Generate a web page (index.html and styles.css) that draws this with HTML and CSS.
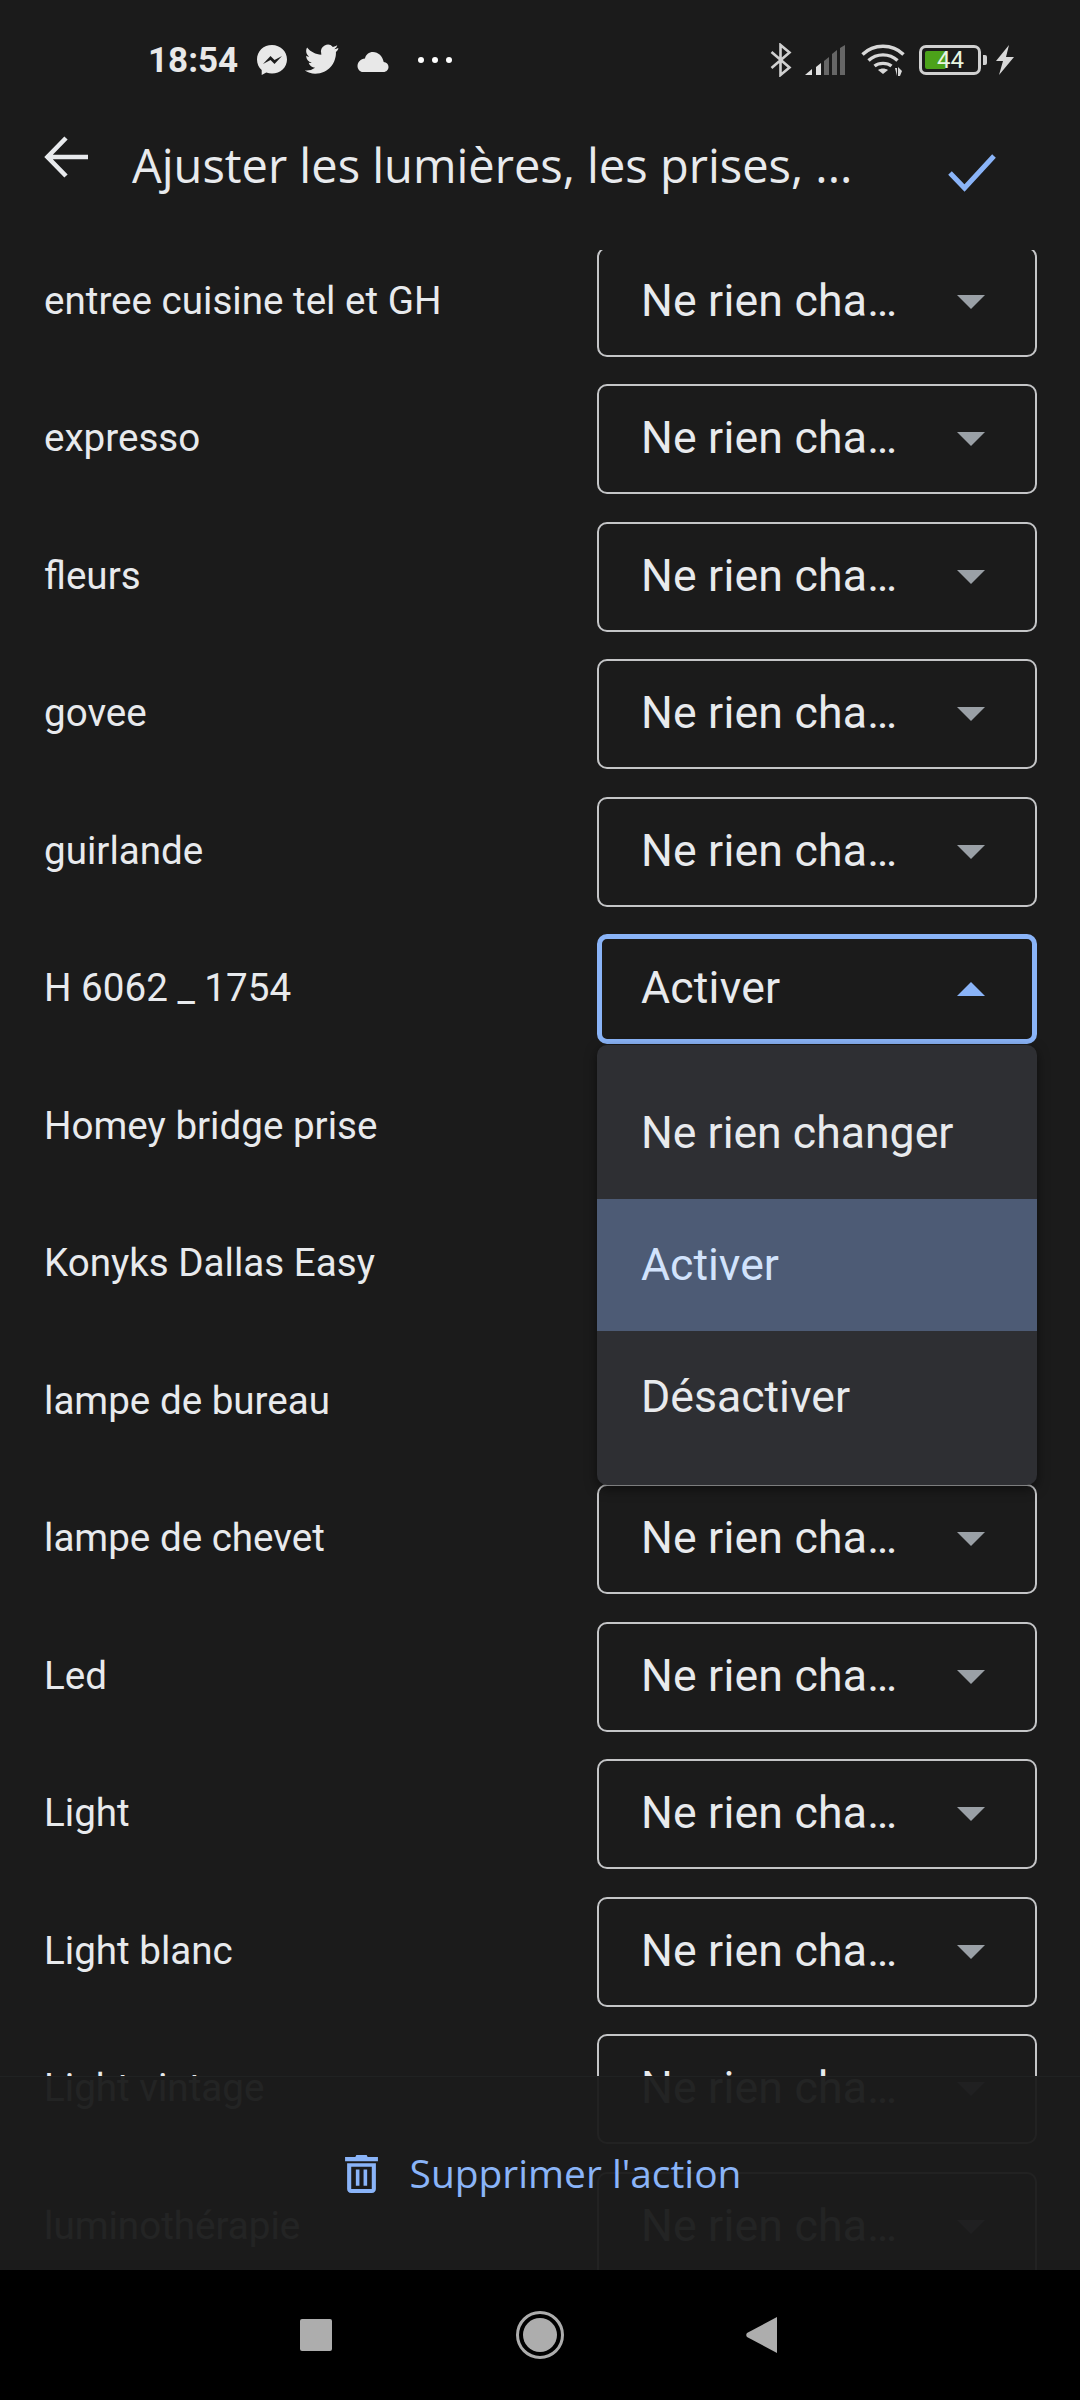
FILE: index.html
```html
<!DOCTYPE html>
<html lang="fr">
<head>
    <meta charset="UTF-8">
    <title>Ajuster les lumières, les prises, ...</title>
    <link rel="stylesheet" href="styles.css">
</head>
<body>
    <div class="screen">
        <div class="status-bar">
            <div class="status-left">
                <span class="clock">18:54</span>
                <svg class="ico-msg" viewBox="0 0 32 32"><path fill="#e8e8e8" d="M16 1C7.6 1 1 7.1 1 15.4c0 4.3 1.8 8 4.7 10.6v5l4.6-2.500c1.800.6 3.700.9 5.700.9 8.400 0 15-6.100 15-14S24.400 1 16 1z"/><path fill="#1b1b1b" d="M7 20l7.500-8 4 4 7.500-4-7.500 8-4-4z"/></svg>
                <svg class="ico-bird" viewBox="0 0 24 24"><path fill="#e8e8e8" d="M23.500 3.500c-.8.400-1.800.6-2.700.7 1-.6 1.700-1.500 2-2.600-.9.500-1.900.9-3 1.100A4.700 4.700 0 0 0 11.800 7c0 .4 0 .7.100 1.100C8 7.900 4.500 6 2.100 3.100c-1.200 2.100-.6 4.800 1.500 6.300-.8 0-1.500-.2-2.100-.6 0 2.300 1.600 4.300 3.800 4.700-.7.200-1.400.2-2.100.1.600 1.900 2.300 3.200 4.400 3.300A9.500 9.500 0 0 1 .5 18.800C2.600 20.200 5 21 7.700 21c9.300 0 14.500-7.800 14.200-14.900 1-.7 1.800-1.600 1.600-2.600z"/></svg>
                <svg class="ico-cloud" viewBox="0 0 32 22"><path fill="#e8e8e8" d="M16 1c-4 0-7.200 2.700-8 6.400C3.700 7.700.5 11 .5 15c0 3.300 2.500 6 5.500 6h20.500c2.800 0 5-2.200 5-5 0-2.700-2.100-4.800-4.800-5C25.600 5.300 21.300 1 16 1z"/></svg>
                <span class="dots"><i></i><i></i><i></i></span>
            </div>
            <div class="status-right">
                <svg class="ico-bt" viewBox="0 0 22 34"><path fill="none" stroke="#d0d0d0" stroke-width="2.600" d="M1.500 9l18 15.500-9 7.500V2l9 7.500L1.500 25"/></svg>
                <svg class="ico-signal" viewBox="0 0 40 30"><path fill="#e0e0e0" d="M0 30l7-6v6z"/><path fill="#e0e0e0" d="M11 22l5-4v12h-5z"/><path fill="#666" d="M19 16l5-4v18h-5zM27 9l5-4v25h-5zM35 3l5-3v30h-5z"/></svg>
                <svg class="ico-wifi" viewBox="0 0 44 34"><g fill="none" stroke="#d8d8d8" stroke-width="3.400"><path d="M1.500 11.500c11-11 30-11 41 0"/><path d="M7.500 17.500c8-7.500 21-7.500 29 0"/><path d="M13.500 23c4.500-3.500 12.500-3.500 17 0"/></g><path fill="#d8d8d8" d="M22 31l-5-4c3-2 7-2 10 0z"/><path fill="#d8d8d8" d="M34 25h2v8zM39 33h-2v-9l4 4z"/></svg>
                <div class="battery">
                    <div class="battery-fill"></div>
                    <span class="battery-num">44</span>
                </div>
                <div class="battery-tip"></div>
                <svg class="ico-bolt" viewBox="0 0 20 30"><path fill="#d8d8d8" d="M14 0L1 16h7L4 30l15-18h-8z"/></svg>
            </div>
        </div>

        <header class="top-bar">
            <svg class="ico-back" viewBox="0 0 44 42"><path fill="none" stroke="#e8eaed" stroke-width="4.600" d="M44 21H4M22 2L3.500 21 22 40"/></svg>
            <h1 class="title">Ajuster les lumières, les prises, ...</h1>
            <svg class="ico-check" viewBox="0 0 48 38"><path fill="none" stroke="#8ab4f8" stroke-width="5" d="M2 19l14.500 15L46 2"/></svg>
        </header>

        <main class="device-list">
            <div class="row"><span class="row-name">entree cuisine tel et GH</span><div class="select"><span class="select-value">Ne rien cha…</span><span class="caret"></span></div></div>
            <div class="row"><span class="row-name">expresso</span><div class="select"><span class="select-value">Ne rien cha…</span><span class="caret"></span></div></div>
            <div class="row"><span class="row-name">fleurs</span><div class="select"><span class="select-value">Ne rien cha…</span><span class="caret"></span></div></div>
            <div class="row"><span class="row-name">govee</span><div class="select"><span class="select-value">Ne rien cha…</span><span class="caret"></span></div></div>
            <div class="row"><span class="row-name">guirlande</span><div class="select"><span class="select-value">Ne rien cha…</span><span class="caret"></span></div></div>
            <div class="row">
                <span class="row-name">H 6062 _ 1754</span>
                <div class="select open">
                    <span class="select-value">Activer</span><span class="caret up"></span>
                    <div class="menu">
                        <div class="menu-item">Ne rien changer</div>
                        <div class="menu-item selected">Activer</div>
                        <div class="menu-item">Désactiver</div>
                    </div>
                </div>
            </div>
            <div class="row"><span class="row-name">Homey bridge prise</span></div>
            <div class="row"><span class="row-name">Konyks Dallas Easy</span></div>
            <div class="row"><span class="row-name">lampe de bureau</span></div>
            <div class="row"><span class="row-name">lampe de chevet</span><div class="select"><span class="select-value">Ne rien cha…</span><span class="caret"></span></div></div>
            <div class="row"><span class="row-name">Led</span><div class="select"><span class="select-value">Ne rien cha…</span><span class="caret"></span></div></div>
            <div class="row"><span class="row-name">Light</span><div class="select"><span class="select-value">Ne rien cha…</span><span class="caret"></span></div></div>
            <div class="row"><span class="row-name">Light blanc</span><div class="select"><span class="select-value">Ne rien cha…</span><span class="caret"></span></div></div>
            <div class="row"><span class="row-name">Light vintage</span><div class="select"><span class="select-value">Ne rien cha…</span><span class="caret"></span></div></div>
            <div class="row"><span class="row-name">luminothérapie</span><div class="select"><span class="select-value">Ne rien cha…</span><span class="caret"></span></div></div>

            <div class="delete-bar">
                <svg class="ico-trash" viewBox="0 0 32 37"><path fill="#8ab4f8" d="M11 0h10l1 2h10v4H0V2h10zM2 8h28v25c0 2-1.500 4-4 4H6c-2.500 0-4-2-4-4zm4 3.500V33h20V11.500zM10.500 14h3.500v16h-3.500zM18 14h3.500v16H18z"/></svg>
                <span class="delete-label">Supprimer l'action</span>
            </div>
        </main>

        <nav class="nav-bar">
            <div class="nav-square"></div>
            <div class="nav-circle"><div class="nav-dot"></div></div>
            <svg class="nav-back" viewBox="0 0 32 36"><path fill="#adadad" d="M31 0v36L1 20c-1-1-1-3 0-4z"/></svg>
        </nav>
    </div>
</body>
</html>
```

FILE: styles.css
```css
/* page */
html, body {
    margin: 0;
    padding: 0;
    background: #1b1b1b;
}

.screen {
    width: 1080px;
    height: 2400px;
    display: flex;
    flex-direction: column;
    overflow: hidden;
    font-family: Roboto, sans-serif;
    color: #e8eaed;
}

/* status bar */
.status-bar {
    height: 120px;
    display: flex;
    justify-content: space-between;
    align-items: flex-start;
    padding: 44px 65px 0 148px;
    box-sizing: border-box;
    flex-shrink: 0;
}

.status-left, .status-right {
    display: flex;
    align-items: center;
    height: 32px;
}

.clock {
    font-size: 35px;
    font-weight: 700;
    color: #e8e8e8;
    width: 108px;
}

.ico-msg { width: 32px; height: 32px; }
.ico-bird { width: 35px; height: 35px; margin-left: 16px; }
.ico-cloud { width: 32px; height: 22px; margin-left: 18px; margin-top: 4px; }

.dots {
    display: flex;
    gap: 8px;
    margin-left: 29px;
}

.dots i {
    width: 6px;
    height: 6px;
    background: #fff;
    border-radius: 50%;
}

.ico-bt { width: 22px; height: 34px; }
.ico-signal { width: 40px; height: 30px; margin-left: 13px; }
.ico-wifi { width: 44px; height: 34px; margin-left: 16px; }

.battery {
    position: relative;
    width: 62px;
    height: 30px;
    margin-left: 14px;
    border: 3px solid #d0d0d0;
    border-radius: 7px;
    box-sizing: border-box;
    background: #1b1b1b;
}

.battery-fill {
    position: absolute;
    left: 3px;
    top: 3px;
    bottom: 3px;
    width: 21px;
    background: #4ca21a;
    border-radius: 2px;
}

.battery-num {
    position: absolute;
    left: 15px;
    top: -2px;
    font-size: 24px;
    line-height: 28px;
    color: #e8f5e0;
}

.battery-tip {
    width: 4px;
    height: 10px;
    margin-left: 2px;
    background: #d0d0d0;
    border-radius: 0 2px 2px 0;
}

.ico-bolt { width: 20px; height: 30px; margin-left: 8px; }

/* top bar */
.top-bar {
    height: 130px;
    display: flex;
    align-items: flex-start;
    position: relative;
    flex-shrink: 0;
}

.ico-back {
    width: 44px;
    height: 42px;
    margin: 16px 0 0 44px;
    flex-shrink: 0;
}

.title {
    margin: 15px 0 0 44px;
    font-size: 47px;
    line-height: 60px;
    font-weight: 400;
    color: #e8eaed;
    white-space: nowrap;
    width: 800px;
    font-family: "Open Sans", sans-serif;
}

.ico-check {
    width: 48px;
    height: 38px;
    position: absolute;
    left: 948px;
    top: 34px;
}

/* list */
.device-list {
    flex: 1;
    min-height: 0;
    position: relative;
    overflow: hidden;
    display: flex;
    flex-direction: column;
    gap: 27.5px;
}

.row {
    height: 110px;
    flex-shrink: 0;
    display: flex;
    align-items: center;
    justify-content: space-between;
    padding: 0 43px 0 44px;
}

.row:first-child {
    margin-top: -3.5px;
}

.row-name {
    font-size: 38.6px;
    color: #e8eaed;
    margin-bottom: 3px;
}

.select {
    position: relative;
    width: 440px;
    height: 110px;
    box-sizing: border-box;
    border: 2px solid #c4c5c7;
    border-radius: 10px;
    display: flex;
    align-items: center;
    justify-content: space-between;
    padding: 0 50px 0 42px;
}

.select-value {
    font-size: 44.6px;
    letter-spacing: 0.2px;
    color: #e8eaed;
    margin-bottom: 2px;
}

.caret {
    width: 0;
    height: 0;
    border-left: 14px solid transparent;
    border-right: 14px solid transparent;
    border-top: 14px solid #9aa0a6;
}

.select.open {
    border: 5px solid #8ab4f8;
    padding: 0 47px 0 39px;
}

.caret.up {
    border-top: 0;
    border-bottom: 14px solid #8ab4f8;
}

/* dropdown */
.menu {
    position: absolute;
    left: -5px;
    right: -5px;
    top: 106px;
    height: 440px;
    padding: 22px 0 0;
    box-sizing: border-box;
    background: #2e2f33;
    border-radius: 10px;
    box-shadow: 0 4px 12px rgba(0, 0, 0, 0.5);
    z-index: 5;
}

.menu-item {
    height: 132px;
    display: flex;
    align-items: center;
    padding-left: 44px;
    font-size: 44.6px;
    color: #e8eaed;
}

.selected {
    background: #4d5b75;
    color: #d2e3fc;
}

/* bottom action */
.delete-bar {
    position: absolute;
    left: 0;
    right: 0;
    bottom: 0;
    height: 194px;
    background: rgba(27, 27, 27, 0.96);
    border-top: 1px solid #202222;
    box-sizing: border-box;
    display: flex;
    justify-content: center;
    align-items: flex-start;
    padding: 73px 0 0 6px;
    z-index: 6;
}

.ico-trash { width: 33px; height: 38px; margin-top: 5px; }

.delete-label {
    margin-left: 32px;
    font-size: 38.9px;
    line-height: 46px;
    color: #8ab4f8;
    font-family: "Open Sans", sans-serif;
}

/* nav bar */
.nav-bar {
    height: 130px;
    flex-shrink: 0;
    background: #000;
    position: relative;
    display: flex;
    align-items: center;
    justify-content: center;
}

.nav-square {
    width: 32px;
    height: 32px;
    background: #adadad;
    border-radius: 2px;
    position: absolute;
    left: 300px;
    top: 49px;
}

.nav-circle {
    width: 48px;
    height: 48px;
    border: 3px solid #adadad;
    border-radius: 50%;
    box-sizing: border-box;
    display: flex;
    align-items: center;
    justify-content: center;
}

.nav-dot {
    width: 34px;
    height: 34px;
    background: #adadad;
    border-radius: 50%;
}

.nav-back {
    width: 32px;
    height: 36px;
    position: absolute;
    left: 746px;
    top: 47px;
}
```
